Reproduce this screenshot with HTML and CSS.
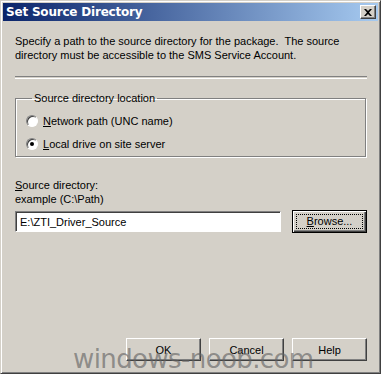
FILE: index.html
```html
<!DOCTYPE html>
<html lang="en">
<head>
    <meta charset="UTF-8">
    <title>Set Source Directory</title>
    <link rel="stylesheet" href="styles.css">
</head>
<body>

<div class="window">
    <div class="titlebar">
        <span class="title">Set Source Directory</span>
        <span class="close">
            <svg width="8" height="7" viewBox="0 0 8 7"><path d="M0 0h2l2 2 2-2h2L5 3.5 8 7H6L4 5 2 7H0l3-3.5z" fill="#000"/></svg>
        </span>
    </div>

    <div class="content">
        <p class="intro">Specify a path to the source directory for the package.&nbsp; The source directory must be accessible to the SMS Service Account.</p>

        <div class="separator"></div>

        <fieldset class="group">
            <legend>Source directory location</legend>
            <label class="radio-row"><span class="radio"></span><span><u>N</u>etwork path (UNC name)</span></label>
            <label class="radio-row"><span class="radio checked"></span><span><u>L</u>ocal drive on site server</span></label>
        </fieldset>

        <div class="path-label"><u>S</u>ource directory:<br>example (C:\Path)</div>

        <div class="path-row">
            <div class="textbox">E:\ZTI_Driver_Source</div>
            <button class="btn default"><span class="focus"><u>B</u>rowse...</span></button>
        </div>

        <div class="spacer"></div>

        <div class="buttons">
            <button class="btn">OK</button>
            <button class="btn">Cancel</button>
            <button class="btn">Help</button>
        </div>
    </div>

    <div class="watermark">windows-noob.com</div>
</div>

</body>
</html>
```

FILE: styles.css
```css
body {
    margin: 0;
    background: #d4d0c8;
    font-family: "Liberation Sans", Arial, sans-serif;
    font-size: 11px;
    color: #000;
}
.window {
    position: relative;
    width: 381px;
    height: 374px;
    box-sizing: border-box;
    background: #d4d0c8;
    border: 1px solid;
    border-color: #d4d0c8 #404040 #404040 #d4d0c8;
    box-shadow: inset 1px 1px #fff, inset -1px -1px #808080;
    padding: 2px;
    display: flex;
    flex-direction: column;
    overflow: hidden;
}
.titlebar {
    height: 18px;
    background: linear-gradient(to right, #0a246a, #a6caf0);
    display: flex;
    align-items: center;
    justify-content: space-between;
    padding: 0 2px 0 3px;
}
.title {
    color: #fff;
    font-weight: bold;
    font-size: 12px;
    font-family: "DejaVu Sans", sans-serif;
    letter-spacing: -0.2px;
}
.close {
    width: 16px;
    height: 14px;
    box-sizing: border-box;
    background: #d4d0c8;
    border: 1px solid;
    border-color: #fff #404040 #404040 #fff;
    box-shadow: inset -1px -1px #808080;
    display: flex;
    align-items: center;
    justify-content: center;
}
.content {
    flex: 1;
    display: flex;
    flex-direction: column;
    padding: 0 11px 10px 12px;
}
.intro {
    margin: 13px 0 0;
    line-height: 14px;
    width: 330px;
}
.separator {
    margin-top: 14px;
    height: 1px;
    border-top: 1px solid #808080;
    border-bottom: 1px solid #fff;
}
.group {
    margin: 13px 1px 0 0;
    padding: 5px 0 8px 10px;
    border: 1px solid #808080;
    box-shadow: 1px 1px #fff, inset 1px 1px #fff;
    height: 65px;
    box-sizing: border-box;
}
.group legend {
    padding: 0 2px;
    margin-left: 6px;
}
.radio-row {
    display: flex;
    align-items: center;
    height: 23px;
    gap: 5px;
}
.radio {
    width: 12px;
    height: 12px;
    box-sizing: border-box;
    border-radius: 50%;
    background: #fff;
    border: 1px solid;
    border-color: #808080 #fff #fff #808080;
    box-shadow: inset 1px 1px #404040;
    display: flex;
    align-items: center;
    justify-content: center;
}
.radio.checked::after {
    content: "";
    width: 4px;
    height: 4px;
    border-radius: 50%;
    background: #000;
}
.path-label {
    margin-top: 21px;
    line-height: 14px;
}
.path-row {
    display: flex;
    justify-content: space-between;
    align-items: center;
    margin-top: 4px;
}
.textbox {
    width: 266px;
    height: 21px;
    box-sizing: border-box;
    background: #fff;
    border: 1px solid;
    border-color: #808080 #fff #fff #808080;
    box-shadow: inset 1px 1px #404040;
    padding: 3px 4px;
    line-height: 14px;
}
.btn {
    width: 75px;
    height: 23px;
    box-sizing: border-box;
    background: #d4d0c8;
    border: 1px solid;
    border-color: #fff #404040 #404040 #fff;
    box-shadow: inset -1px -1px #808080;
    font: inherit;
    color: #000;
    padding: 0;
    margin: 0;
}
.btn.default {
    border: 1px solid #000;
    box-shadow: inset 1px 1px #fff, inset -1px -1px #404040, inset -2px -2px #808080;
    padding: 3px;
}
.focus {
    display: block;
    height: 100%;
    box-sizing: border-box;
    border: 1px dotted #000;
    line-height: 13px;
}
.spacer {
    flex: 1;
}
.buttons {
    display: flex;
    justify-content: flex-end;
    gap: 8px;
}
.watermark {
    position: absolute;
    left: 72px;
    bottom: 0;
    line-height: 28px;
    font-family: "DejaVu Sans", sans-serif;
    font-size: 26px;
    color: rgba(100, 100, 100, 0.65);
    letter-spacing: -0.6px;
    pointer-events: none;
}
```
